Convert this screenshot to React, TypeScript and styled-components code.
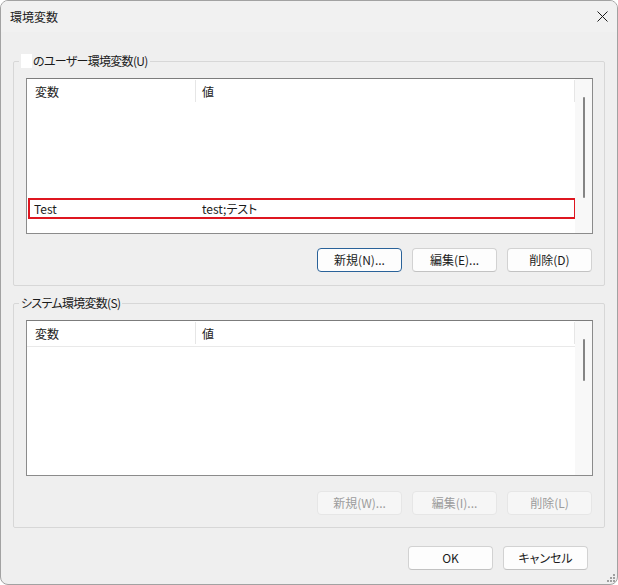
import styled, { createGlobalStyle } from "styled-components";

const GlobalStyle = createGlobalStyle`
  html, body {
    margin: 0;
    background: #ffffff;
  }
  body {
    font-family: "Noto Sans CJK JP", "Noto Sans", sans-serif;
    font-size: 12px;
    color: #1b1b1b;
    font-feature-settings: "palt";
  }
`;

const Window = styled.div`
  position: relative;
  width: 618px;
  height: 585px;
  box-sizing: border-box;
  border: 1px solid #a2a2a2;
  border-radius: 8px;
  background: #efefef;
  overflow: hidden;
  display: flex;
  flex-direction: column;
`;

const TitleBar = styled.div`
  height: 31px;
  display: flex;
  align-items: center;
  justify-content: space-between;
  padding: 0 9px 0 9px;
  background: #f1f1f1;
`;

const Title = styled.span`
  font-size: 12px;
  line-height: 16px;
`;

const Content = styled.div`
  padding: 0 12px;
  display: flex;
  flex-direction: column;
`;

const Group = styled.fieldset<{ $top: number }>`
  margin: ${(p) => p.$top}px 0 0;
  padding: 0;
  min-inline-size: 0;
  border: 1px solid #d7d7d7;
  border-radius: 2px;
`;

const Legend = styled.legend`
  margin-left: 5px;
  padding: 0 2px;
  line-height: 16px;
  font-size: 12px;
  letter-spacing: -0.7px;
  display: flex;
  align-items: center;
  gap: 1px;
`;

const BlankMark = styled.span`
  display: inline-block;
  width: 11px;
  height: 14px;
  background: #ffffff;
`;

const GroupInner = styled.div<{ $bottom: number }>`
  padding: 9px 11px ${(p) => p.$bottom}px 12px;
  display: flex;
  flex-direction: column;
`;

const ListView = styled.div`
  width: 567px;
  height: 156px;
  box-sizing: border-box;
  border: 1px solid #8b8b8b;
  border-top-color: #7c7c7c;
  background: #ffffff;
  display: grid;
  grid-template-columns: 1fr 17px;
`;

const ListMain = styled.div`
  display: flex;
  flex-direction: column;
  min-width: 0;
`;

const Header = styled.div<{ $divided: boolean }>`
  height: 26px;
  box-sizing: border-box;
  display: grid;
  grid-template-columns: 169px 1fr;
  border-bottom: 1px solid ${(p) => (p.$divided ? "#e9e9e9" : "#ffffff")};
`;

const HeaderCell = styled.div`
  display: flex;
  align-items: center;
  padding-left: 8px;
  margin: 1px 0 2px;
  border-right: 1px solid #e6e6e6;
  &:last-child {
    padding-left: 6px;
  }
`;

const Rows = styled.div<{ $offset: number }>`
  padding-top: ${(p) => p.$offset}px;
`;

const MarkedRow = styled.div`
  margin-left: 1px;
  width: 548px;
  height: 21px;
  box-sizing: border-box;
  border: 2px solid #de1620;
  display: grid;
  grid-template-columns: 166px 1fr;
  align-items: center;
`;

const Cell = styled.span`
  padding-left: 4px;
  line-height: 16px;
  &:last-child {
    padding-left: 6px;
  }
`;

const ScrollTrack = styled.div`
  background: #f8f8f8;
  display: flex;
  justify-content: center;
  padding-top: 18px;
`;

const Thumb = styled.div<{ $length: number }>`
  width: 2px;
  height: ${(p) => p.$length}px;
  border-radius: 1px;
  background: #858585;
`;

const ButtonRow = styled.div<{ $top: number }>`
  margin-top: ${(p) => p.$top}px;
  padding-right: 1px;
  display: flex;
  justify-content: flex-end;
  gap: 10px;
`;

const Button = styled.button<{ $default?: boolean }>`
  width: 85px;
  height: 24px;
  box-sizing: border-box;
  padding: 0;
  border-radius: 4px;
  border: 1px solid ${(p) => (p.$default ? "#2a6299" : "#d2d2d2")};
  border-bottom-color: ${(p) => (p.$default ? "#2a6299" : "#c2c2c2")};
  background: #fdfdfd;
  color: #1b1b1b;
  font-family: inherit;
  font-size: 12px;
  font-feature-settings: "palt";
  line-height: 16px;
  &:disabled {
    background: #f6f6f6;
    border-color: #e6e6e6;
    color: #9c9c9c;
  }
`;

const Footer = styled.div`
  margin-top: 18px;
  padding-right: 17px;
  display: flex;
  justify-content: flex-end;
  gap: 10px;
`;

const Grip = styled.svg`
  position: absolute;
  right: 2px;
  bottom: 2px;
`;

function CloseIcon() {
  return (
    <svg width="11" height="11" viewBox="0 0 11 11">
      <path d="M0.5 0.5 L10.5 10.5 M10.5 0.5 L0.5 10.5" stroke="#1b1b1b" strokeWidth="1" />
    </svg>
  );
}

type ListProps = {
  divided: boolean;
  thumb: number;
  marked?: { name: string; value: string; offset: number };
};

function VariableList({ divided, thumb, marked }: ListProps) {
  return (
    <ListView>
      <ListMain>
        <Header $divided={divided}>
          <HeaderCell>変数</HeaderCell>
          <HeaderCell>値</HeaderCell>
        </Header>
        {marked ? (
          <Rows $offset={marked.offset}>
            <MarkedRow>
              <Cell>{marked.name}</Cell>
              <Cell>{marked.value}</Cell>
            </MarkedRow>
          </Rows>
        ) : null}
      </ListMain>
      <ScrollTrack>
        <Thumb $length={thumb} />
      </ScrollTrack>
    </ListView>
  );
}

export default function App() {
  return (
    <>
      <GlobalStyle />
      <Window>
        <TitleBar>
          <Title>環境変数</Title>
          <CloseIcon />
        </TitleBar>
        <Content>
          <Group $top={21}>
            <Legend>
              <BlankMark />
              のユーザー環境変数(U)
            </Legend>
            <GroupInner $bottom={13}>
              <VariableList
                divided={false}
                thumb={101}
                marked={{ name: "Test", value: "test;テスト", offset: 93 }}
              />
              <ButtonRow $top={14}>
                <Button $default>新規(N)...</Button>
                <Button>編集(E)...</Button>
                <Button>削除(D)</Button>
              </ButtonRow>
            </GroupInner>
          </Group>
          <Group $top={9}>
            <Legend>システム環境変数(S)</Legend>
            <GroupInner $bottom={12}>
              <VariableList divided thumb={42} />
              <ButtonRow $top={15}>
                <Button disabled>新規(W)...</Button>
                <Button disabled>編集(I)...</Button>
                <Button disabled>削除(L)</Button>
              </ButtonRow>
            </GroupInner>
          </Group>
          <Footer>
            <Button>OK</Button>
            <Button>キャンセル</Button>
          </Footer>
        </Content>
        <Grip width="9" height="9" viewBox="0 0 9 9">
          <rect x="7" y="1" width="2" height="2" fill="#a0a0a0" />
          <rect x="4" y="4" width="2" height="2" fill="#a0a0a0" />
          <rect x="7" y="4" width="2" height="2" fill="#a0a0a0" />
          <rect x="1" y="7" width="2" height="2" fill="#a0a0a0" />
          <rect x="4" y="7" width="2" height="2" fill="#a0a0a0" />
          <rect x="7" y="7" width="2" height="2" fill="#a0a0a0" />
        </Grip>
      </Window>
    </>
  );
}
